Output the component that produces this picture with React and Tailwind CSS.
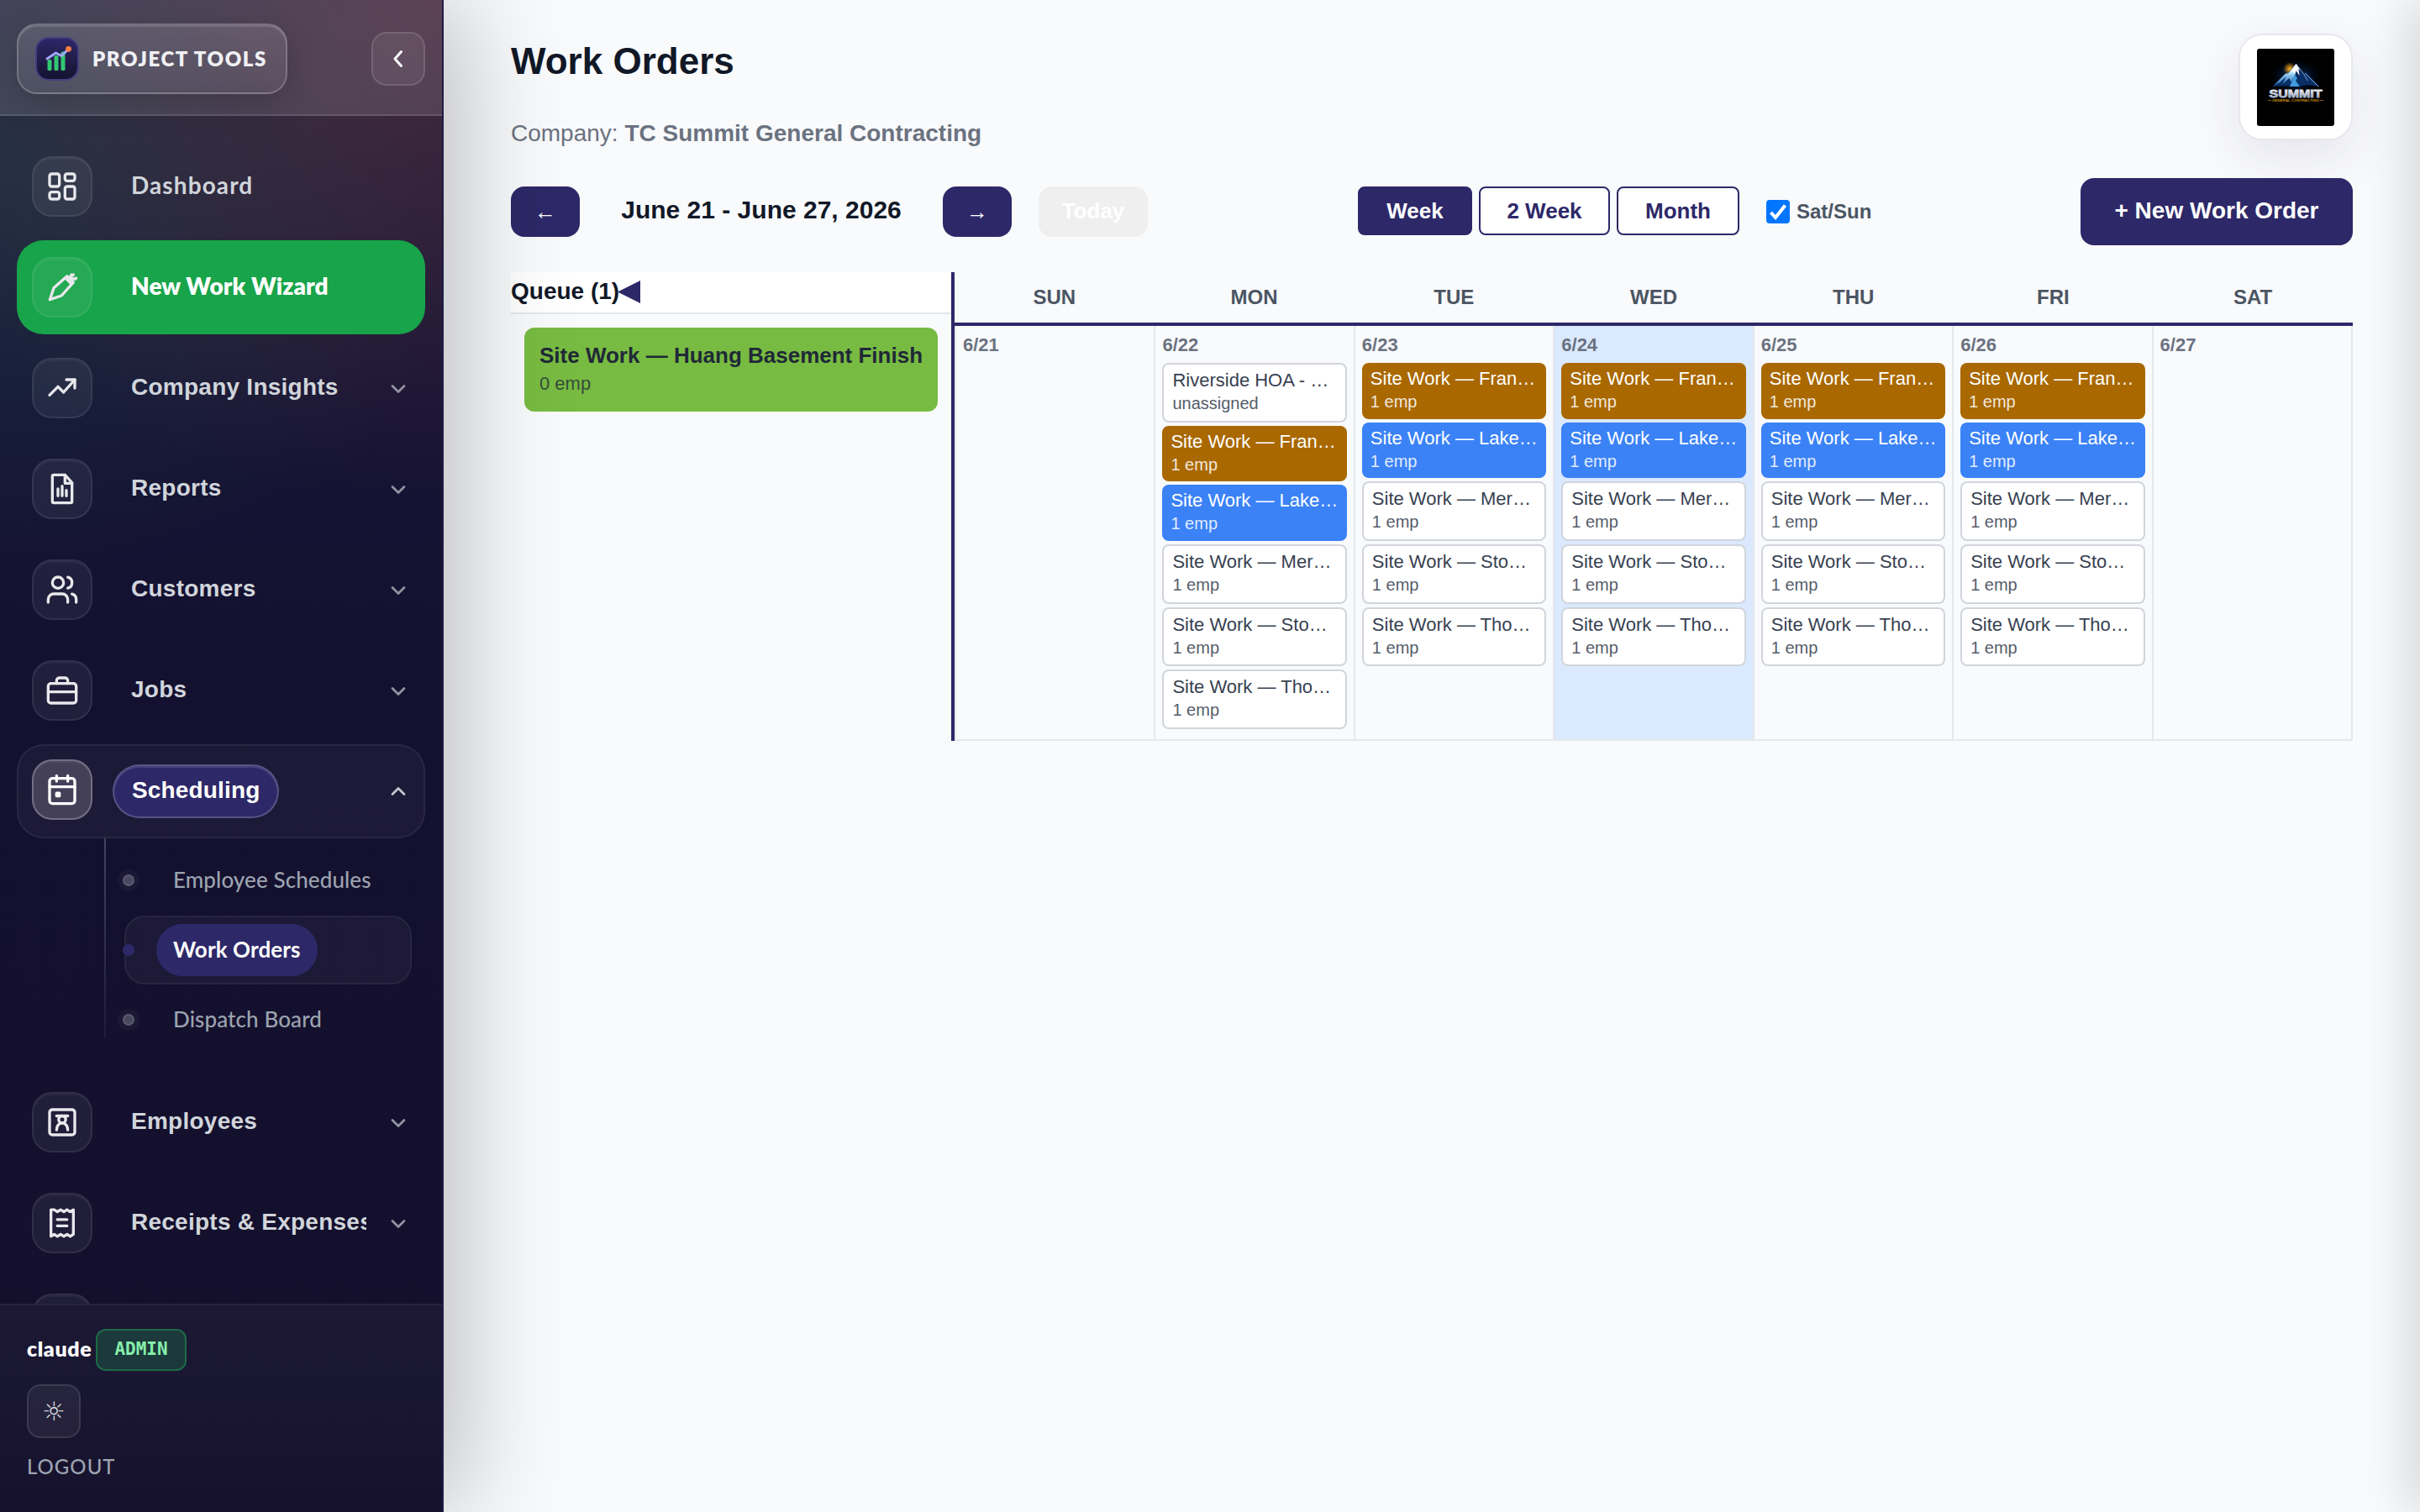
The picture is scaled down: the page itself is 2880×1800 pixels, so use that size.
import React from 'react';
import clsx from 'clsx';
import { ChevronDown, ChevronUp } from 'lucide-react';

const NAV_TOP = [
  { label: 'Company Insights', icon: 'trend' },
  { label: 'Reports', icon: 'report' },
  { label: 'Customers', icon: 'users' },
  { label: 'Jobs', icon: 'briefcase' },
];

const NAV_BOTTOM = [
  { label: 'Employees', icon: 'badge' },
  { label: 'Receipts & Expenses', icon: 'receipt' },
];

const SUB_ITEMS = ['Employee Schedules', 'Work Orders', 'Dispatch Board'];

const RIVERSIDE = { title: 'Riverside HOA - Lawn', sub: 'unassigned', tone: 'plain' };
const WEEKDAY_ORDERS = [
  { title: 'Site Work — Franklin', sub: '1 emp', tone: 'amber' },
  { title: 'Site Work — Lakeview', sub: '1 emp', tone: 'blue' },
  { title: 'Site Work — Mercer', sub: '1 emp', tone: 'plain' },
  { title: 'Site Work — Stone St', sub: '1 emp', tone: 'plain' },
  { title: 'Site Work — Thomas', sub: '1 emp', tone: 'plain' },
];

const DAYS = [
  { name: 'SUN', date: '6/21', orders: [] },
  { name: 'MON', date: '6/22', orders: [RIVERSIDE, ...WEEKDAY_ORDERS] },
  { name: 'TUE', date: '6/23', orders: WEEKDAY_ORDERS },
  { name: 'WED', date: '6/24', orders: WEEKDAY_ORDERS, today: true },
  { name: 'THU', date: '6/25', orders: WEEKDAY_ORDERS },
  { name: 'FRI', date: '6/26', orders: WEEKDAY_ORDERS },
  { name: 'SAT', date: '6/27', orders: [] },
];

const ICONS = {
  dashboard: (
    <>
      <rect x="3" y="3" width="7" height="9" rx="1.5" />
      <rect x="14" y="3" width="7" height="5" rx="1.5" />
      <rect x="14" y="12" width="7" height="9" rx="1.5" />
      <rect x="3" y="16" width="7" height="5" rx="1.5" />
    </>
  ),
  wand: (
    <>
      <path d="M3.2 20.8 6 12.5 15.5 4l4.5 4.5-8.5 9.5z" />
      <path d="m14.5 5.5 4 4M17 5l3-2M19.5 6.5 22 5.5M18.5 3v3h3" />
    </>
  ),
  trend: (
    <>
      <path d="m3 17 6-6 4 4 8-9" />
      <path d="M15 6h6v6" />
    </>
  ),
  report: (
    <>
      <path d="M14 2H6a1 1 0 0 0-1 1v18a1 1 0 0 0 1 1h12a1 1 0 0 0 1-1V7.5z" />
      <path d="M14 2v6h5M9 17v-5M12 17v-7M15 17v-4" />
    </>
  ),
  users: (
    <>
      <path d="M16 21v-2a4 4 0 0 0-4-4H6a4 4 0 0 0-4 4v2" />
      <circle cx="9" cy="7" r="4" />
      <path d="M22 21v-2a4 4 0 0 0-3-3.87M16 3.13a4 4 0 0 1 0 7.75" />
    </>
  ),
  briefcase: (
    <>
      <rect x="2" y="7" width="20" height="14" rx="2" />
      <path d="M16 7V5a2 2 0 0 0-2-2h-4a2 2 0 0 0-2 2v2M2 13h20" />
    </>
  ),
  calendar: (
    <>
      <rect x="3" y="4" width="18" height="18" rx="2" />
      <path d="M16 2v4M8 2v4M3 10h18" />
      <rect x="8" y="14.5" width="2" height="2" />
    </>
  ),
  badge: (
    <>
      <rect x="3" y="3" width="18" height="18" rx="2" />
      <path d="M8 7.5h8" />
      <circle cx="12" cy="10" r="2.5" />
      <path d="M8 17.5c0-3 1.8-5 4-5s4 2 4 5" />
    </>
  ),
  receipt: (
    <>
      <path d="M4 2.5v19l2.3-1.5 2.3 1.5 2.3-1.5 2.3 1.5 2.3-1.5 2.3 1.5L20 20V2.5l-2.3 1.5-2.3-1.5L13.2 4l-2.3-1.5L8.6 4 6.3 2.5z" />
      <path d="M8.5 9.5h7M8.5 14h7" />
    </>
  ),
};

const NavIcon = ({ name, active }) => (
  <div
    className={clsx(
      'flex h-[72px] w-[72px] shrink-0 items-center justify-center rounded-3xl border-2',
      active
        ? '-mt-1 border-white/25 bg-white/17 text-white shadow-[inset_0_2px_0_rgba(255,255,255,0.06)]'
        : 'border-white/8 bg-white/6 text-[#e8e8ec] shadow-[inset_0_2px_0_rgba(255,255,255,0.04)]'
    )}
  >
    {name && (
      <svg viewBox="0 0 24 24" className="h-10 w-10" fill="none" stroke="currentColor" strokeWidth="2" strokeLinecap="round" strokeLinejoin="round">
        {ICONS[name]}
      </svg>
    )}
  </div>
);

const NavItem = ({ label, icon }) => (
  <div className="flex h-28 shrink-0 items-center px-[18px]">
    <NavIcon name={icon} />
    <span className="mb-0.5 ml-[46px] w-[280px] overflow-hidden text-[28px] font-bold tracking-[0.25px] whitespace-nowrap text-[#d1d5db]">{label}</span>
    <ChevronDown className="mt-0.5 ml-auto h-7 w-7 text-[#9292a2]" strokeWidth={2.4} />
  </div>
);

const AppMark = () => (
  <svg viewBox="0 0 52 52" className="h-[52px] w-[52px] shrink-0">
    <defs>
      <linearGradient id="mark-bg" x1="0" y1="0" x2="0" y2="1">
        <stop offset="0" stopColor="#2d2868" />
        <stop offset="1" stopColor="#16122f" />
      </linearGradient>
    </defs>
    <rect x="1" y="1" width="50" height="50" rx="15" fill="url(#mark-bg)" stroke="#443e82" strokeWidth="2" />
    <g fill="#34c770">
      <rect x="14.5" y="27" width="5" height="13" rx="1.5" />
      <rect x="22.5" y="22" width="5" height="18" rx="1.5" />
      <rect x="30.5" y="17.5" width="5" height="22.5" rx="1.5" />
    </g>
    <path d="M14 26 24.5 19l6.500 3.500L39 15" fill="none" stroke="#a5a8fb" strokeWidth="3" strokeLinecap="round" strokeLinejoin="round" />
    <circle cx="39.5" cy="14.3" r="3.4" fill="#ff8142" />
  </svg>
);

const SummitLogo = () => (
  <svg viewBox="0 0 92 92" className="h-[92px] w-[92px]">
    <defs>
      <radialGradient id="glow">
        <stop offset="0" stopColor="#0b4fa8" stopOpacity="0.9" />
        <stop offset="1" stopColor="#000" stopOpacity="0" />
      </radialGradient>
      <radialGradient id="sun">
        <stop offset="0" stopColor="#ffb52e" />
        <stop offset="1" stopColor="#ff9500" stopOpacity="0" />
      </radialGradient>
      <linearGradient id="ice" x1="0" y1="0" x2="0" y2="1">
        <stop offset="0" stopColor="#fff" />
        <stop offset="0.4" stopColor="#a9dcfa" />
        <stop offset="1" stopColor="#1763ad" />
      </linearGradient>
      <linearGradient id="steel" x1="0" y1="0" x2="0" y2="1">
        <stop offset="0" stopColor="#fff" />
        <stop offset="1" stopColor="#8d9bb8" />
      </linearGradient>
    </defs>
    <rect width="92" height="92" rx="3" fill="#000" />
    <ellipse cx="46" cy="34" rx="34" ry="24" fill="url(#glow)" />
    <circle cx="39" cy="24" r="8" fill="url(#sun)" />
    <path d="m46.5 18 9 12 3-2 16 17-14-2-14 2-12-1-16 1 15-15 4-1z" fill="#0a2f66" />
    <path d="m46.5 18-9 11-4 1-14 14 8-4 7-7-4 9 8-7 2 5 5-9 2-8z" fill="url(#ice)" />
    <path d="m39 45 6-14 3 4-2 3 5 7z" fill="#3f9bdc" />
    <path d="m46.5 18 5 7-2-1 1 8-4-6-2 4-2-3-4 4z" fill="#fff" />
    <path d="m46.5 18 9 12 5 8M57 29l8 8 8 8" fill="none" stroke="#9cc6ea" strokeWidth="0.8" />
    <text x="46" y="57.5" textAnchor="middle" textLength="63" lengthAdjust="spacingAndGlyphs" fill="url(#steel)" stroke="url(#steel)" strokeWidth="0.9" className="font-['Liberation_Sans',sans-serif] text-[13.5px] font-bold">SUMMIT</text>
    <text x="46" y="63" textAnchor="middle" textLength="56" lengthAdjust="spacingAndGlyphs" fill="#c98d17" className="font-['Liberation_Sans',sans-serif] text-[4px] font-bold">GENERAL CONTRACTING</text>
    <path d="M13 61.5h4M75 61.5h4" stroke="#c98d17" strokeWidth="0.7" />
  </svg>
);

const Sidebar = () => (
  <aside className="relative z-10 flex h-full w-[528px] shrink-0 flex-col border-r-2 border-[#1f1d45] bg-[radial-gradient(ellipse_760px_600px_at_100%_0,rgba(235,105,75,0.22),transparent),radial-gradient(ellipse_600px_500px_at_0_200px,rgba(50,170,120,0.17),transparent),linear-gradient(180deg,#17153a_0,#141130_45%,#130f2b_100%)] shadow-[20px_0_120px_rgba(0,0,0,0.25)]">
    <div className="flex h-[138px] shrink-0 items-center justify-between border-b-2 border-white/12 bg-white/12 px-5 pt-1">
      <div className="flex h-[84px] w-[322px] items-center gap-4 rounded-3xl border-2 border-white/20 bg-linear-to-b from-white/12 to-white/6 pl-5 shadow-[inset_0_2px_0_rgba(255,255,255,0.12),0_12px_36px_rgba(0,0,0,0.18)]">
        <AppMark />
        <span className="font-['Lato',sans-serif] text-2xl font-extrabold tracking-[1.6px] whitespace-nowrap text-[#f1f1f4]">PROJECT TOOLS</span>
      </div>
      <div className="flex h-16 w-16 items-center justify-center rounded-[18px] border-2 border-white/12 bg-white/7">
        <svg viewBox="0 0 24 24" className="h-6 w-6" fill="none" stroke="#fff" strokeWidth="3" strokeLinecap="round" strokeLinejoin="round">
          <path d="m15.5 3.5-7.5 8.5 7.5 8.5" />
        </svg>
      </div>
    </div>

    <nav className="flex min-h-0 flex-1 flex-col gap-2 overflow-hidden px-5 pt-7">
      <div className="flex h-28 shrink-0 items-center px-[18px]">
        <NavIcon name="dashboard" />
        <span className="mb-1 ml-[46px] font-['Lato',sans-serif] text-[28px] font-bold tracking-[1.1px] text-[#d1d5db]">Dashboard</span>
      </div>
      <div className="flex h-28 shrink-0 items-center rounded-[32px] bg-[#18a44a] px-[18px]">
        <NavIcon name="wand" />
        <span className="mb-1 ml-[46px] font-['Lato',sans-serif] text-[28px] font-extrabold tracking-[0.1px] text-white">New Work Wizard</span>
      </div>
      {NAV_TOP.map((item) => (
        <NavItem key={item.label} {...item} />
      ))}
      <div className="shrink-0">
        <div className="flex h-28 items-center rounded-[32px] border-2 border-white/6 bg-white/4 px-4">
          <NavIcon name="calendar" active />
          <span className="ml-6 flex h-16 items-center rounded-full border-2 border-white/20 bg-[#2d2868] px-[21px] pb-0.5 text-[28px] font-bold tracking-[0.15px] text-white shadow-[inset_0_2px_0_rgba(255,255,255,0.12)]">Scheduling</span>
          <ChevronUp className="ml-auto h-7 w-7 text-[#c5c5d0]" strokeWidth={2.4} />
        </div>
        <div className="ml-[104px] flex h-[238px] border-l-2 border-transparent [border-image:linear-gradient(180deg,#45435c,#1f1b3c)_1]">
          <div className="ml-[15px] flex flex-col gap-px pt-[9px]">
            {SUB_ITEMS.map((label) => {
              const current = label === 'Work Orders';
              return (
                <div
                  key={label}
                  className={clsx('ml-[7px] flex h-[82px] w-[342px] shrink-0 items-center rounded-3xl border-2', current ? 'border-white/5 bg-white/4' : 'border-transparent')}
                >
                  <span
                    className={clsx(
                      '-ml-[4px] h-3.5 w-3.5 shrink-0 rounded-full',
                      current ? 'bg-[#2d2868]' : 'border-2 border-[#5b596f] bg-[#4a485e] shadow-[0_0_0_6px_rgba(255,255,255,0.03)]'
                    )}
                  />
                  <span
                    className={clsx(
                      "ml-[26px] flex h-[62px] items-center rounded-full px-5 pb-0.5 font-['Lato',sans-serif] text-[26px] whitespace-nowrap",
                      current ? 'bg-[#2d2868] font-bold tracking-[0.1px] text-white' : 'font-medium tracking-[0.1px] text-[#9ca3af]'
                    )}
                  >
                    {label}
                  </span>
                </div>
              );
            })}
          </div>
        </div>
      </div>
      <div className="mt-9 flex flex-col gap-2">
        {NAV_BOTTOM.map((item) => (
          <NavItem key={item.label} {...item} />
        ))}
        <NavItem label="" />
      </div>
    </nav>

    <div className="flex h-[248px] shrink-0 flex-col border-t-2 border-white/7 bg-linear-to-b from-white/4 to-white/1 px-8 pt-7">
      <div className="flex items-center gap-[5px]">
        <span className="w-[77px] pb-0.5 font-['Lato',sans-serif] text-[25px] font-extrabold tracking-[0.6px] text-white">claude</span>
        <span className="flex h-[50px] w-[108px] items-center justify-center rounded-xl border-2 border-[#22c55e]/35 bg-[#22c55e]/20 font-['DejaVu_Sans_Mono',monospace] text-[21px] font-bold text-[#86efac]">ADMIN</span>
      </div>
      <div className="mt-4 flex h-16 w-16 items-center justify-center rounded-2xl border-2 border-white/10 bg-white/6 font-['DejaVu_Sans',sans-serif] text-[31px] leading-none text-[#d1d5db]">☼</div>
      <span className="mt-[18px] font-['Lato',sans-serif] text-2xl font-medium tracking-[1px] text-[#9ca3af]">LOGOUT</span>
    </div>
  </aside>
);

const TONES = {
  plain: 'h-[70.67px] border-2 border-[#d1d5db] bg-white text-[#374151]',
  amber: 'h-[66.67px] bg-[#a96800] text-white',
  blue: 'h-[66.67px] bg-[#3b82f6] text-white',
};

const OrderCard = ({ title, sub, tone }) => (
  <div className={clsx('mb-1 overflow-hidden rounded-lg px-2.5 pt-1.5', TONES[tone])}>
    <div className="truncate text-[22px] leading-[26px]">{title}</div>
    <div className="text-xl leading-7 opacity-85">{sub}</div>
  </div>
);

const DayCell = ({ date, orders, today }) => (
  <div className={clsx('min-w-0 border-r-2 border-[#e5e7eb] p-2', today && 'bg-[#dbe9fe]')}>
    <div className="mb-1 h-8 text-[22px] leading-[30px] font-bold text-[#6b7280]">{date}</div>
    {orders.map((order) => (
      <OrderCard key={order.title} {...order} />
    ))}
  </div>
);

const ArrowButton = ({ children }) => (
  <button className="flex h-[60px] w-[82px] items-center justify-center rounded-2xl bg-[#2d2868] text-[26px] font-bold text-white">{children}</button>
);

const Toolbar = () => (
  <div className="flex h-20 items-center">
    <ArrowButton>←</ArrowButton>
    <h2 className="w-[432px] pb-[5px] text-center text-[30px] font-bold text-[#111827]">June 21 - June 27, 2026</h2>
    <ArrowButton>→</ArrowButton>
    <button className="ml-8 h-[60px] w-[130px] rounded-2xl bg-[#efefef] pb-0.5 text-[26px] font-bold text-white">Today</button>
    <div className="ml-[250px] flex gap-2 pb-0.5 text-[26px] font-bold">
      <button className="h-[58px] w-[136px] rounded-lg border-2 border-[#2d2868] bg-[#2d2868] text-white">Week</button>
      <button className="h-[58px] w-[156px] rounded-lg border-2 border-[#2d2868] bg-white text-[#2d2868]">2 Week</button>
      <button className="h-[58px] w-[146px] rounded-lg border-2 border-[#2d2868] bg-white text-[#2d2868]">Month</button>
    </div>
    <label className="ml-8 flex items-center gap-2 text-2xl font-bold text-[#4b5563]">
      <svg viewBox="0 0 28 28" className="h-7 w-7">
        <rect width="28" height="28" rx="4" fill="#0075ff" />
        <path d="m5.5 15 5.5 6L22.5 6.5" fill="none" stroke="#fff" strokeWidth="4" />
      </svg>
      Sat/Sun
    </label>
    <button className="ml-auto h-20 w-[324px] rounded-2xl bg-[#2d2868] pb-[3px] text-[28px] font-bold text-white">+ New Work Order</button>
  </div>
);

const Queue = () => (
  <div className="w-[528px] shrink-0 border-r-4 border-[#2d2868]">
    <div className="flex h-[50px] items-center border-b-2 border-[#e5e7eb] bg-white pb-0.5 text-[28px] font-bold text-[#111827]">
      Queue (1)
      <svg viewBox="0 0 27 27" className="-ml-0.5 h-[27px] w-[27px]" fill="#2d2868">
        <path d="M27 0v27L0 13.5z" />
      </svg>
    </div>
    <div className="mx-4 mt-4 h-[100px] rounded-xl bg-[#78bb42] px-[18px] pt-[17px] text-[#1f2937]">
      <div className="text-[26px] leading-8 font-bold whitespace-nowrap">Site Work — Huang Basement Finish</div>
      <div className="text-[22px] leading-9 opacity-75">0 emp</div>
    </div>
  </div>
);

const Calendar = () => (
  <div className="flex h-[558px]">
    <Queue />
    <div className="flex min-w-0 flex-1 flex-col">
      <div className="grid h-16 shrink-0 grid-cols-7 border-b-4 border-[#2d2868]">
        {DAYS.map((day) => (
          <div key={day.name} className="flex items-center justify-center text-2xl font-bold text-[#4b5563]">{day.name}</div>
        ))}
      </div>
      <div className="grid flex-1 grid-cols-7 border-b-2 border-l-2 border-[#e5e7eb]">
        {DAYS.map((day) => (
          <DayCell key={day.date} {...day} />
        ))}
      </div>
    </div>
  </div>
);

export default function App() {
  return (
    <div className="relative flex h-[1800px] w-[2880px] overflow-hidden bg-[#f9fafc] font-['Liberation_Sans',Arial,sans-serif]">
      <Sidebar />
      <main className="min-w-0 flex-1 px-20 pt-10">
        <header className="flex h-[172px] justify-between">
          <div>
            <h1 className="text-[44px] leading-[66px] font-bold text-[#111827]">Work Orders</h1>
            <p className="mt-8 text-[28px] leading-[42px] text-[#6b7280]">
              Company: <strong>TC Summit General Contracting</strong>
            </p>
          </div>
          <div className="flex h-[127px] w-[136px] items-center justify-center rounded-[28px] border-2 border-[#e8e7ee] bg-white shadow-[0_20px_60px_rgba(45,40,104,0.1)]">
            <SummitLogo />
          </div>
        </header>
        <Toolbar />
        <div className="mt-8">
          <Calendar />
        </div>
      </main>
      {/* shadow cast by the closed drawer on the right */}
      <div className="absolute top-0 left-[2880px] z-20 h-[1800px] w-10 shadow-[-8px_0_60px_rgba(0,0,0,0.2)]" />
    </div>
  );
}
